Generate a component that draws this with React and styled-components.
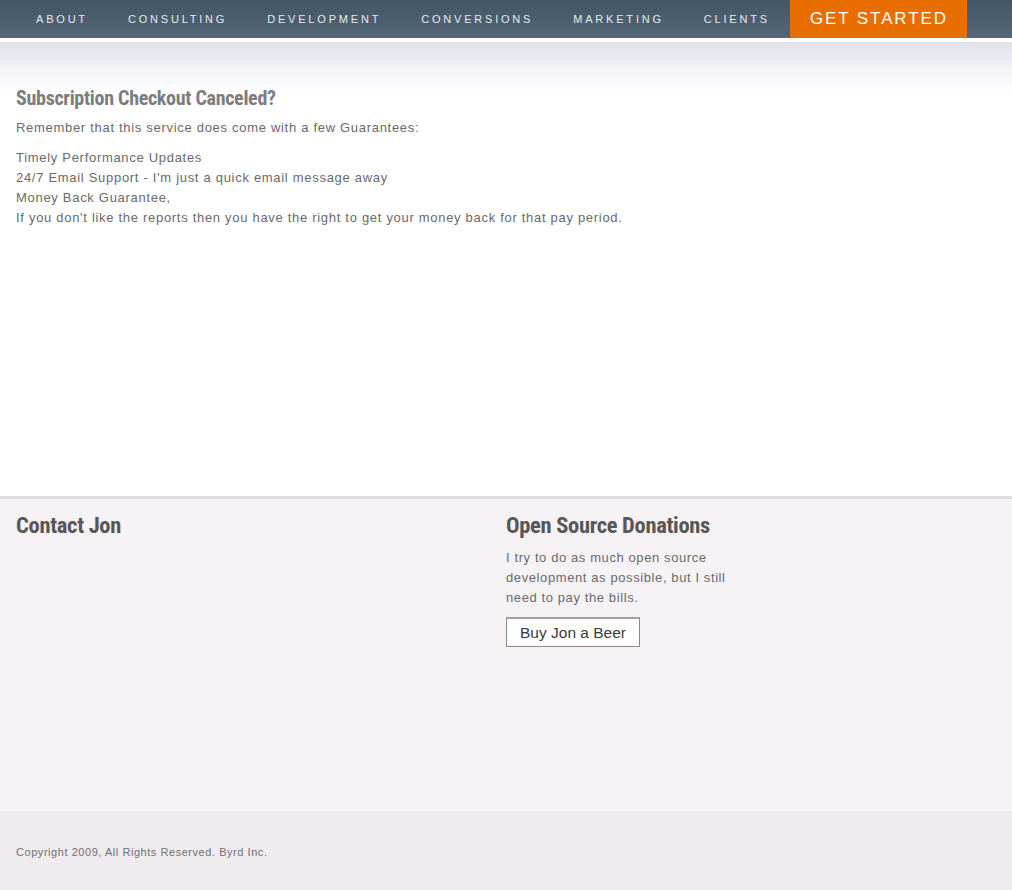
import React from "react";
import styled, { createGlobalStyle } from "styled-components";

const Global = createGlobalStyle`
  html, body {
    margin: 0;
    padding: 0;
    background: #ffffff;
    font-family: "Liberation Sans", Arial, sans-serif;
  }
`;

const navItems = ["ABOUT", "CONSULTING", "DEVELOPMENT", "CONVERSIONS", "MARKETING", "CLIENTS"];

const Page = styled.div`
  width: 1012px;
  display: flex;
  flex-direction: column;
`;

const NavBar = styled.div`
  height: 38px;
  display: flex;
  align-items: stretch;
  padding-left: 16px;
  background: linear-gradient(#425664, #4c5f6e 50%, #546779);
  border-bottom: 4px solid #ffffff;
`;

const NavLink = styled.a`
  display: flex;
  align-items: center;
  padding: 0 20px;
  color: #e6e9ec;
  font-size: 11px;
  letter-spacing: 2.8px;
  text-decoration: none;
  white-space: nowrap;
`;

const Started = styled.a`
  display: flex;
  align-items: center;
  padding: 0 19px 0 20px;
  background: #e86e00;
  color: #ffffff;
  font-size: 17px;
  letter-spacing: 1.9px;
  text-decoration: none;
  white-space: nowrap;
`;

const Band = styled.div`
  height: 48px;
  background: linear-gradient(#e0e3e7, #e8e9ed 25%, #eeeff6 45%, #f7f5f7 65%, #f7f8fc 85%, #ffffff);
`;

const Main = styled.div`
  height: 410px;
  padding: 0 16px;
  box-sizing: border-box;
  margin-top: -4px;
`;

const Title = styled.h2`
  margin: 0 0 8px;
  font-family: "Liberation Sans Narrow", "Roboto Condensed", "Liberation Sans", sans-serif;
  font-weight: bold;
  font-size: ${({ big }) => (big ? "22.5px" : "20px")};
  line-height: 24px;
  color: ${({ big }) => (big ? "#575757" : "#7c7c7c")};
  letter-spacing: -0.3px;
`;

const Text = styled.p`
  margin: 0 0 10px;
  font-size: 13px;
  line-height: 20px;
  color: #6a6a6a;
  letter-spacing: 0.7px;
`;

const Footer = styled.div`
  border-top: 3px solid #dcdedd;
  background: #f6f2f6;
  height: 315px;
  padding: 14px 16px 0;
  box-sizing: border-box;
  display: grid;
  grid-template-columns: 490px 1fr;
`;

const Column = styled.div``;

const Note = styled(Text)`
  width: 230px;
  margin-top: 11px;
  margin-bottom: 9px;
  letter-spacing: 0.6px;
`;

const BeerButton = styled.button`
  width: 134px;
  height: 30px;
  background: #ffffff;
  border: 1px solid #8a8a8a;
  border-top: 2px solid #a0a0a0;
  font-family: "Liberation Sans", Arial, sans-serif;
  font-size: 15.5px;
  color: #3a3a3a;
  padding: 0;
  cursor: pointer;
`;

const Bottom = styled.div`
  background: #efebef;
  height: 79px;
  padding: 2px 16px 0;
  box-sizing: border-box;
  display: flex;
  align-items: center;
  font-size: 11px;
  color: #707070;
  letter-spacing: 0.55px;
`;

export default function App() {
  return (
    <Page>
      <Global />
      <NavBar>
        {navItems.map((item) => (
          <NavLink key={item} href="#">
            {item}
          </NavLink>
        ))}
        <Started href="#">GET STARTED</Started>
      </NavBar>
      <Band />
      <Main>
        <Title>Subscription Checkout Canceled?</Title>
        <Text>Remember that this service does come with a few Guarantees:</Text>
        <Text>
          Timely Performance Updates
          <br />
          24/7 Email Support - I'm just a quick email message away
          <br />
          Money Back Guarantee,
          <br />
          If you don't like the reports then you have the right to get your money back for that pay period.
        </Text>
      </Main>
      <Footer>
        <Column>
          <Title big>Contact Jon</Title>
        </Column>
        <Column>
          <Title big>Open Source Donations</Title>
          <Note>
            I try to do as much open source development as possible, but I still need to pay the bills.
          </Note>
          <BeerButton>Buy Jon a Beer</BeerButton>
        </Column>
      </Footer>
      <Bottom>Copyright 2009, All Rights Reserved. Byrd Inc.</Bottom>
    </Page>
  );
}
